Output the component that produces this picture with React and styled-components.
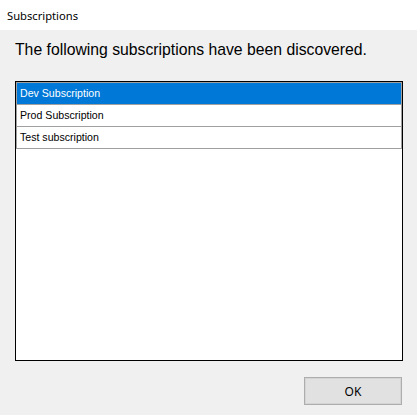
import React from "react";
import styled, { createGlobalStyle } from "styled-components";

const Global = createGlobalStyle`
  html, body { margin: 0; padding: 0; background: #f0f0f0; }
  #root { width: 417px; height: 415px; }
`;

const Window = styled.div`
  width: 417px;
  height: 415px;
  background: #f0f0f0;
  display: flex;
  flex-direction: column;
  overflow: hidden;
`;

const TitleBar = styled.div`
  height: 30px;
  background: #ffffff;
  display: flex;
  align-items: center;
  padding-left: 7px;
  font-family: "Noto Sans", "Open Sans", sans-serif;
  font-size: 11.2px;
  color: #000;
  box-sizing: border-box;
`;

const Body = styled.div`
  display: flex;
  flex-direction: column;
  padding: 0 14px 0 15px;
`;

const Heading = styled.div`
  margin-top: 11px;
  height: 18px;
  line-height: 18px;
  font-family: "Liberation Sans", Arial, sans-serif;
  font-size: 15.75px;
  color: #000;
  white-space: nowrap;
`;

const ListBox = styled.div`
  margin-top: 22px;
  width: 388px;
  height: 280px;
  box-sizing: border-box;
  border: 1px solid #000;
  background: #fff;
  display: flex;
  flex-direction: column;
`;

const Row = styled.div`
  height: 21px;
  line-height: 21px;
  border: 1px solid #a0a0a0;
  border-top: ${(p) => (p.$first ? "1px solid #a0a0a0" : "none")};
  background: ${(p) => (p.$selected ? "#0078d7" : "#fff")};
  color: ${(p) => (p.$selected ? "#fff" : "#000")};
  padding-left: 3px;
  font-family: "Liberation Sans", Arial, sans-serif;
  font-size: 10.6px;
  white-space: nowrap;
`;

const Footer = styled.div`
  display: flex;
  justify-content: flex-end;
  margin-top: 16px;
  width: 388px;
`;

const Button = styled.button`
  width: 98px;
  height: 28px;
  margin-right: 1px;
  box-sizing: border-box;
  border: 1px solid #adadad;
  box-shadow: inset 0 0 0 1px #d4d4d4;
  background: #e1e1e1;
  font-family: "Noto Sans", "Open Sans", sans-serif;
  font-size: 12px;
  color: #000;
  padding: 0;
  display: flex;
  align-items: center;
  justify-content: center;
`;

const items = ["Dev Subscription", "Prod Subscription", "Test subscription"];

export default function App() {
  return (
    <>
      <Global />
      <Window>
        <TitleBar>Subscriptions</TitleBar>
        <Body>
          <Heading>The following subscriptions have been discovered.</Heading>
          <ListBox>
            {items.map((it, i) => (
              <Row key={it} $first={i === 0} $selected={i === 0}>
                {it}
              </Row>
            ))}
          </ListBox>
          <Footer>
            <Button>OK</Button>
          </Footer>
        </Body>
      </Window>
    </>
  );
}
